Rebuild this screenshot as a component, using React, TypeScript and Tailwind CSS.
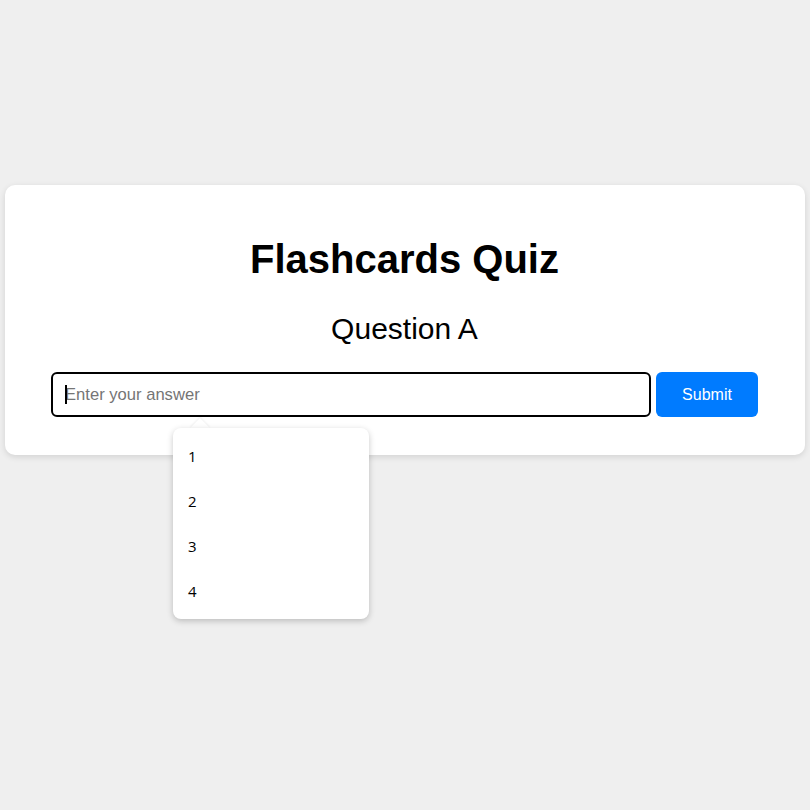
export default function App() {
  const options = ["1", "2", "3", "4"];

  return (
    <div className="min-h-[810px] w-full bg-[#efefef] font-['Liberation_Sans',Arial,sans-serif] pt-[185px] px-[5px]">
      <div className="w-[800px] rounded-[10px] bg-white shadow-[0_2px_6px_rgba(0,0,0,0.12)] pl-[46px] pr-[47px] pt-[50px] pb-[38px]">
        <h1 className="text-center text-[40px] leading-[48px] font-bold text-black">Flashcards Quiz</h1>
        <p className="mt-[28px] text-center text-[30px] leading-[36px] text-black">Question A</p>

        <div className="mt-[25px] flex gap-[5px]">
          <div className="relative flex-1">
            <input
              type="text"
              placeholder="Enter your answer"
              className="h-[45px] w-full rounded-[6px] border-2 border-black bg-white pl-[12px] text-[16.6px] text-black outline-none placeholder:text-[#757575]"
            />
            <span className="absolute left-[14px] top-[13px] h-[19px] w-[1.5px] bg-black" />

            {/* datalist popup */}
            <div className="absolute left-[122px] top-[56px] z-10 w-[196px]">
              <div className="absolute left-[20px] -top-[7px] h-[14px] w-[14px] rotate-45 bg-white shadow-[-1px_-1px_2px_rgba(0,0,0,0.06)]" />
              <ul className="relative rounded-[8px] bg-white pt-[6px] pb-[5px] shadow-[0_2px_6px_rgba(0,0,0,0.22)] font-['Open_Sans','Noto_Sans',sans-serif] text-[15px] text-black">
                {options.map((o) => (
                  <li key={o} className="flex h-[45px] items-center pl-[15px]">
                    {o}
                  </li>
                ))}
              </ul>
            </div>
          </div>
          <button className="h-[45px] w-[102px] rounded-[6px] bg-[#007bff] text-[16px] text-white">Submit</button>
        </div>
      </div>
    </div>
  );
}
